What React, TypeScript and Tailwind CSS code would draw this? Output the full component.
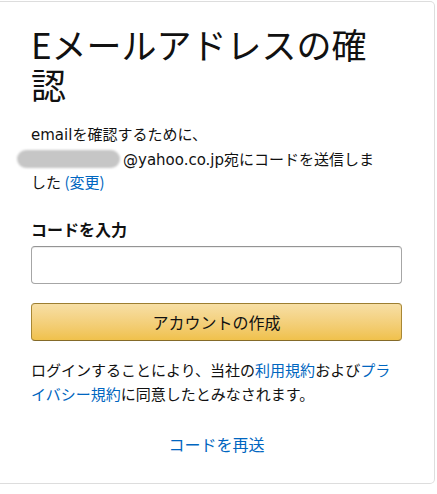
import React from 'react';

const font = { fontFamily: '"Noto Sans CJK JP", "Liberation Sans", sans-serif' };
const bodyFont = { fontFamily: '"DejaVu Sans", "Noto Sans CJK JP", sans-serif' };

export default function App() {
  return (
    <div className="min-h-screen bg-white pt-[1px] text-[#111]" style={font}>
      <div className="w-[435px] rounded-r-[5px] border-y border-r border-[#dddddd] bg-white pl-[31px] pr-[32px] pt-[22px] pb-[28px]">
        <h1 className="w-[345px] text-[35px] font-normal leading-[40px]">Eメールアドレスの確認</h1>

        <p className="mt-[19px] text-[15px] leading-[22.5px]">
          <span style={bodyFont}>email</span>を確認するために、
          <br />
          <span className="-ml-[14px] mr-[3px] inline-block h-[18px] w-[103px] translate-y-[3px] rounded-full bg-[#c6c6c6] blur-[1px]" />
          <span style={bodyFont}>@yahoo.co.jp</span>宛にコードを送信しま
          <br />
          した <a href="#" className="text-[#0066c0]">(変更)</a>
        </p>

        <label htmlFor="code" className="mt-[24px] block text-[16px] font-bold leading-[22px]">
          コードを入力
        </label>
        <input
          id="code"
          type="text"
          className="mt-[6px] block h-[38px] w-full rounded-[4px] border border-[#a6a6a6] border-t-[#949494] px-[8px] shadow-[0_1px_0_rgba(0,0,0,0.07)_inset] outline-none"
        />

        <button
          type="button"
          className="mt-[19px] flex h-[38px] w-full items-center justify-center rounded-[4px] border border-[#a88734] border-b-[#846a29] border-t-[#9c7e31] bg-gradient-to-b from-[#f7dfa5] to-[#f0c14b] text-[16px] leading-none text-[#111]"
        >
          アカウントの作成
        </button>

        <p className="mt-[17px] text-[15px] leading-[24px]">
          ログインすることにより、当社の<a href="#" className="text-[#0066c0]">利用規約</a>および<a href="#" className="text-[#0066c0]">プライバシー規約</a>に同意したとみなされます。
        </p>

        <div className="mt-[27px] text-center text-[16px] leading-[22px]">
          <a href="#" className="text-[#0066c0]">コードを再送</a>
        </div>
      </div>
    </div>
  );
}
